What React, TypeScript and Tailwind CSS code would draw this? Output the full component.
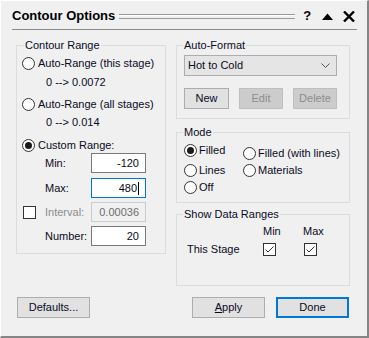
import type { ReactNode } from 'react';

function Radio({ checked = false }: { checked?: boolean }) {
  return (
    <span className="w-[13px] h-[13px] rounded-full border border-[#333333] bg-white flex items-center justify-center shrink-0">
      {checked && <span className="w-[7px] h-[7px] rounded-full bg-[#1a1a1a]" />}
    </span>
  );
}

function Check({ checked = false }: { checked?: boolean }) {
  return (
    <span className="w-[13px] h-[13px] border border-[#333333] bg-white flex items-center justify-center shrink-0">
      {checked && (
        <svg width="11" height="11" viewBox="0 0 11 11">
          <path d="M1.5 5.5 L4 8 L9.5 2.5" fill="none" stroke="#333333" strokeWidth="1" />
        </svg>
      )}
    </span>
  );
}

function Group({ label, left, className, children }: { label: string; left: string; className: string; children: ReactNode }) {
  return (
    <div className={`relative border border-[#dcdcdc] ${className}`}>
      <span className={`absolute top-[-8px] ${left} px-px h-[14px] leading-[14px] bg-[#f0f0f0]`}>{label}</span>
      {children}
    </div>
  );
}

function Btn({ children, disabled = false, w = 'w-[73px]' }: { children: ReactNode; disabled?: boolean; w?: string }) {
  return (
    <div
      className={`${w} h-[21px] flex items-center justify-center border ${
        disabled ? 'bg-[#cccccc] border-[#bfbfbf] text-[#8c8c8c]' : 'bg-[#e1e1e1] border-[#adadad]'
      }`}
    >
      {children}
    </div>
  );
}

function Field({ label, value, state, box }: { label: string; value: string; state?: 'focus' | 'disabled'; box?: boolean }) {
  const border =
    state === 'focus'
      ? 'border-[#0078d7] bg-white'
      : state === 'disabled'
      ? 'border-[#cccccc] bg-[#f0f0f0] text-[#6d6d6d]'
      : 'border-[#7a7a7a] bg-white';
  return (
    <div className="flex items-center pl-[6px]">
      <span className="w-[13px] shrink-0">{box && <Check />}</span>
      <span className={`ml-[9px] w-[46px] ${state === 'disabled' ? 'text-[#8c8c8c]' : ''}`}>{label}</span>
      <div className={`w-[55px] h-[20px] border ${border} flex items-center justify-end pr-[6px]`}>
        {value}
        {state === 'focus' && <span className="w-px h-[13px] bg-black ml-px" />}
      </div>
    </div>
  );
}

export default function App() {
  return (
    <div className="w-[369px] h-[338px] bg-[#f0f0f0] border-l border-t border-l-white border-t-white border-r-2 border-b-2 border-r-[#858585] border-b-[#858585] font-['Liberation_Sans',Arial,sans-serif] text-[11px] text-[#0a0a1e] overflow-hidden">
      {/* title */}
      <div className="mt-[5px] ml-[11px] h-[20px] flex items-center">
        <span className="text-[13px] font-bold text-black">Contour Options</span>
        <div className="ml-[4px] w-[176px] h-[5px] border-y border-[#9a9a9a] flex flex-col">
          <div className="h-px bg-white" />
        </div>
        <span className="ml-[8px] text-[13px] font-bold text-black">?</span>
        <svg className="ml-[11px]" width="11" height="7" viewBox="0 0 11 7">
          <path d="M0 7 L5.5 0.5 L11 7 Z" fill="#000" />
        </svg>
        <svg className="ml-[10px]" width="12" height="11" viewBox="0 0 12 11">
          <path d="M1 0.5 L11 10.5 M11 0.5 L1 10.5" stroke="#000" strokeWidth="2.4" />
        </svg>
      </div>
      <div className="mt-[3px] ml-[11px] w-[345px] h-px bg-[#8a8a8a]" />

      {/* body */}
      <div className="mt-[15px] pl-[15px] flex items-start">
        <Group label="Contour Range" left="left-[7px]" className="w-[150px] h-[209px]">
          <div className="pl-[5px] pt-[9px]">
            <div className="h-[16px] flex items-center gap-[3px]">
              <Radio />
              <span>Auto-Range (this stage)</span>
            </div>
            <div className="mt-[3px] h-[16px] flex items-center pl-[24px]">0 --&gt; 0.0072</div>
            <div className="mt-[6px] h-[16px] flex items-center gap-[3px]">
              <Radio />
              <span>Auto-Range (all stages)</span>
            </div>
            <div className="mt-[2px] h-[16px] flex items-center pl-[24px]">0 --&gt; 0.014</div>
            <div className="mt-[8px] h-[14px] flex items-center gap-[3px]">
              <Radio checked />
              <span>Custom Range:</span>
            </div>
          </div>
          <div className="mt-px flex flex-col gap-[5px]">
            <Field label="Min:" value="-120" />
            <Field label="Max:" value="480" state="focus" />
            <div className="-mt-px">
              <Field label="Interval:" value="0.00036" state="disabled" box />
            </div>
            <div className="-mt-px">
              <Field label="Number:" value="20" />
            </div>
          </div>
        </Group>

        <div className="ml-[10px] w-[174px] flex flex-col">
          <Group label="Auto-Format" left="left-[6px]" className="h-[74px]">
            <div className="pl-[7px] pt-[9px]">
              <div className="w-[153px] h-[21px] border border-[#adadad] bg-[#e5e5e5] flex items-center pl-[3px] pr-[6px] justify-between">
                <span>Hot to Cold</span>
                <svg width="9" height="5" viewBox="0 0 9 5">
                  <path d="M0.5 0.5 L4.5 4.5 L8.5 0.5" fill="none" stroke="#555" strokeWidth="1" />
                </svg>
              </div>
              <div className="mt-[12px] flex gap-[10px]">
                <Btn w="w-[45px]">New</Btn>
                <Btn w="w-[44px]" disabled>
                  Edit
                </Btn>
                <Btn w="w-[44px]" disabled>
                  Delete
                </Btn>
              </div>
            </div>
          </Group>

          <Group label="Mode" left="left-[6px]" className="mt-[13px] h-[71px]">
            <div className="pl-[7px] flex">
              <div className="w-[59px] pt-[10px] flex flex-col">
                <div className="h-[14px] flex items-center gap-[2px]">
                  <Radio checked />
                  <span>Filled</span>
                </div>
                <div className="mt-[6px] h-[14px] flex items-center gap-[2px]">
                  <Radio />
                  <span>Lines</span>
                </div>
                <div className="mt-[3px] h-[14px] flex items-center gap-[2px]">
                  <Radio />
                  <span>Off</span>
                </div>
              </div>
              <div className="pt-[13px] flex flex-col">
                <div className="h-[14px] flex items-center gap-[2px]">
                  <Radio />
                  <span>Filled (with lines)</span>
                </div>
                <div className="mt-[3px] h-[14px] flex items-center gap-[2px]">
                  <Radio />
                  <span>Materials</span>
                </div>
              </div>
            </div>
          </Group>

          <Group label="Show Data Ranges" left="left-[6px]" className="mt-[11px] h-[72px]">
            <div className="pl-[10px] pt-[9px]">
              <div className="h-[14px] flex items-center">
                <span className="w-[76px]" />
                <span className="w-[40px]">Min</span>
                <span>Max</span>
              </div>
              <div className="mt-[4px] h-[14px] flex items-center">
                <span className="w-[76px]">This Stage</span>
                <span className="w-[41px]">
                  <Check checked />
                </span>
                <Check checked />
              </div>
            </div>
          </Group>
        </div>
      </div>

      {/* footer */}
      <div className="mt-[11px] pl-[16px] flex">
        <Btn>Defaults...</Btn>
        <div className="ml-[102px]">
          <Btn>
            <span>
              <span className="underline">A</span>pply
            </span>
          </Btn>
        </div>
        <div className="ml-[11px] w-[73px] h-[21px] flex items-center justify-center border-2 border-[#0078d7] bg-[#e1e1e1]">
          Done
        </div>
      </div>
    </div>
  );
}
